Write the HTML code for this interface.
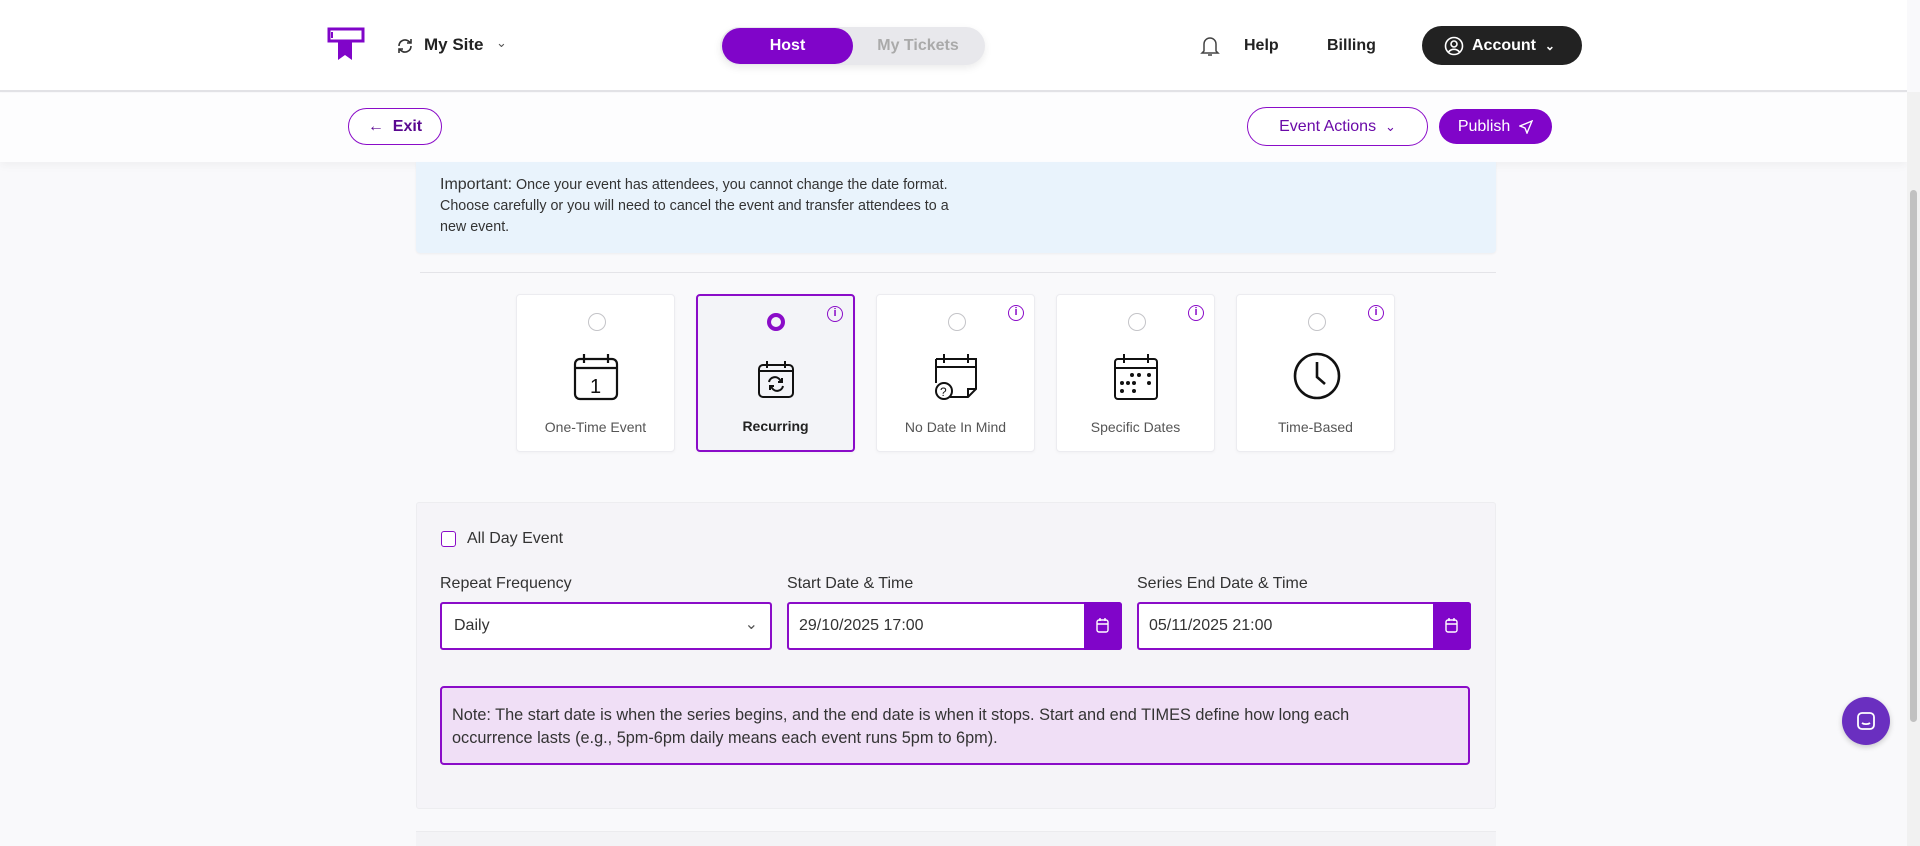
<!DOCTYPE html>
<html><head><meta charset="utf-8"><style>
*{box-sizing:border-box;margin:0;padding:0}
body{width:1920px;height:846px;overflow:hidden;background:#f9f9fb;font-family:"Liberation Sans",sans-serif;color:#222;position:relative}
.abs{position:absolute}
.hdr{left:0;top:0;width:1907px;height:92px;background:#fff;border-bottom:2px solid #e2e2e6}
.bar2{left:0;top:93px;width:1907px;height:69px;background:#fdfdfe;box-shadow:0 4px 8px rgba(0,0,0,.04)}
.btn{position:absolute;border-radius:20px;display:flex;align-items:center;justify-content:center;font-size:16px}
.card{position:absolute;top:294px;width:159px;height:158px;background:#fff;border:1px solid #ececf0;border-radius:4px;box-shadow:0 1px 3px rgba(0,0,0,.04)}
.card.sel{border:2px solid #8a0cc8;background:#f3f4f8}
.radio{position:absolute;left:71px;top:18px;width:18px;height:18px;border:1.5px solid #c4c4c8;border-radius:50%}
.card .lbl{position:absolute;left:0;right:0;top:124px;text-align:center;font-size:14px;color:#555}
.info{position:absolute;right:10px;top:10px;width:16px;height:16px;border:1.5px solid #8a0cc8;border-radius:50%;color:#8a0cc8;font-size:11px;text-align:center;line-height:13px;font-weight:bold}
.ico{position:absolute;left:55px;top:56px}
.lab{position:absolute;top:575px;font-size:16px;color:#333}
.inp{position:absolute;top:602px;height:48px;border:2px solid #8a0cc8;border-radius:3px;background:#fff;font-size:16px;color:#333;padding-left:12px;display:flex;align-items:center}
.cb{position:absolute;right:-2px;top:-2px;width:38px;height:48px;background:#8005c9;border-radius:0 3px 3px 0}
</style></head><body>
<div class="abs hdr"></div>
<svg class="abs" style="left:326px;top:26px" width="40" height="36" viewBox="0 0 40 36"><path d="M3 3h34v12H3z" fill="none" stroke="#8005c9" stroke-width="3"/><path d="M12 15h14v19l-7-5-7 5z" fill="#8005c9"/><path d="M6 6v6" stroke="#8005c9" stroke-width="2"/></svg>
<svg class="abs" style="left:396px;top:37px" width="18" height="18" viewBox="0 0 18 18" fill="none" stroke="#333" stroke-width="1.6"><path d="M3 9a6 6 0 0 1 10-4.5L15 6M15 9a6 6 0 0 1-10 4.5L3 12"/><path d="M15 2v4h-4M3 16v-4h4"/></svg>
<div class="abs" style="left:424px;top:35px;font-size:17px;font-weight:bold">My Site</div>
<div class="abs" style="left:496px;top:35px;font-size:13px;color:#555">&#8964;</div>
<div class="abs" style="left:720px;top:27px;width:265px;height:38px;background:#e8e8ec;border-radius:19px;box-shadow:0 3px 8px rgba(0,0,0,.08)"></div>
<div class="btn" style="left:722px;top:28px;width:131px;height:36px;background:#8005c9;color:#fff;font-weight:bold">Host</div>
<div class="btn" style="left:853px;top:28px;width:130px;height:36px;color:#aaa;font-weight:bold">My Tickets</div>
<svg class="abs" style="left:1200px;top:35px" width="20" height="22" viewBox="0 0 20 22" fill="none" stroke="#444" stroke-width="1.5"><path d="M4 16V9a6 6 0 0 1 12 0v7l2 2H2z"/><path d="M8 20h4"/></svg>
<div class="abs" style="left:1244px;top:37px;font-size:16px;font-weight:bold">Help</div>
<div class="abs" style="left:1327px;top:37px;font-size:16px;font-weight:bold">Billing</div>
<div class="btn" style="left:1422px;top:26px;width:160px;height:39px;background:#222;color:#fff;font-weight:bold;justify-content:flex-start;padding-left:22px">
<svg width="20" height="20" viewBox="0 0 20 20" fill="none" stroke="#fff" stroke-width="1.6" style="margin-right:8px"><circle cx="10" cy="10" r="8.5"/><circle cx="10" cy="8" r="3"/><path d="M4.5 16a7 7 0 0 1 11 0"/></svg>Account&nbsp;&nbsp;<span style="font-size:12px">&#8964;</span></div>
<div class="abs bar2"></div>
<div class="btn" style="left:348px;top:108px;width:94px;height:37px;border:1.5px solid #8a0cc8;color:#5a0890;font-weight:bold;background:#fff">&#8592;&nbsp;&nbsp;Exit</div>
<div class="btn" style="left:1247px;top:107px;width:181px;height:39px;border:1.5px solid #8a0cc8;color:#6a0aa8;background:#fff">Event Actions&nbsp;&nbsp;<span style="font-size:13px">&#8964;</span></div>
<div class="btn" style="left:1439px;top:109px;width:113px;height:35px;background:#8005c9;color:#fff">Publish&nbsp;&nbsp;<svg width="14" height="14" viewBox="0 0 14 14" fill="none" stroke="#fff" stroke-width="1.4"><path d="M13 1L1 6l5 2 2 5z"/></svg></div>
<div class="abs" style="left:1907px;top:92px;width:13px;height:754px;background:#f1f1f1"></div>
<div class="abs" style="left:1910px;top:190px;width:7px;height:532px;background:#c1c1c1;border-radius:4px"></div>
<div class="abs" style="left:416px;top:162px;width:1080px;height:91px;background:#e9f3fc;border-radius:0 0 4px 4px;box-shadow:0 1px 2px rgba(0,0,0,.05)"></div>
<div class="abs" style="left:440px;top:174px;font-size:14.3px;line-height:21px;color:#333"><span style="font-size:16px">Important:</span> Once your event has attendees, you cannot change the date format.<br>Choose carefully or you will need to cancel the event and transfer attendees to a<br>new event.</div>
<div class="abs" style="left:420px;top:272px;width:1076px;height:1px;background:#e4e4e8"></div>
<div class="card" style="left:516px"><div class="radio"></div>
<svg class="ico" width="48" height="50" viewBox="0 0 48 50" fill="none" stroke="#111" stroke-width="2.2"><rect x="3" y="8" width="42" height="40" rx="5"/><path d="M3 17h42M12 3v9M36 3v9"/><text x="18" y="42" font-size="20" fill="#111" stroke="none" font-family="Liberation Sans">1</text></svg>
<div class="lbl">One-Time Event</div></div>
<div class="card sel" style="left:696px;top:294px"><div class="radio" style="border:4px solid #8a0cc8;left:69px;top:17px"></div><div class="info">i</div>
<svg class="ico" style="left:58px;top:62px" width="40" height="42" viewBox="0 0 40 42" fill="none" stroke="#111" stroke-width="2"><rect x="3" y="7" width="34" height="32" rx="4"/><path d="M3 13h34M11 3v7M29 3v7"/><path d="M13 24a6 6 0 0 1 11-2l2 2M27 28a6 6 0 0 1-11 2l-2-2"/><path d="M26 20v4h-4M14 32v-4h4"/></svg>
<div class="lbl" style="font-weight:bold;color:#222;top:122px">Recurring</div></div>
<div class="card" style="left:876px"><div class="radio"></div><div class="info">i</div>
<svg class="ico" width="48" height="50" viewBox="0 0 48 50" fill="none" stroke="#111" stroke-width="2"><path d="M4 8h40v30l-8 8H18"/><path d="M4 8v24M4 16h40M12 3v9M36 3v9"/><path d="M36 46v-8h8"/><circle cx="12" cy="40" r="8"/><text x="8" y="45" font-size="12" fill="#111" stroke="none" font-family="Liberation Sans">?</text></svg>
<div class="lbl">No Date In Mind</div></div>
<div class="card" style="left:1056px"><div class="radio"></div><div class="info">i</div>
<svg class="ico" width="48" height="50" viewBox="0 0 48 50" fill="none" stroke="#111" stroke-width="2"><rect x="3" y="8" width="42" height="40" rx="3"/><path d="M3 17h42M12 3v9M36 3v9"/><g fill="#111" stroke="none"><circle cx="20" cy="24" r="2"/><circle cx="27" cy="24" r="2"/><circle cx="37" cy="24" r="2"/><circle cx="10" cy="32" r="2"/><circle cx="16" cy="32" r="2"/><circle cx="22" cy="32" r="2"/><circle cx="37" cy="32" r="2"/><circle cx="10" cy="40" r="2"/><circle cx="22" cy="40" r="2"/></g></svg>
<div class="lbl">Specific Dates</div></div>
<div class="card" style="left:1236px"><div class="radio"></div><div class="info">i</div>
<svg class="ico" width="50" height="50" viewBox="0 0 50 50" fill="none" stroke="#111" stroke-width="2.6"><circle cx="25" cy="25" r="22"/><path d="M25 11v15l8 7"/></svg>
<div class="lbl">Time-Based</div></div>
<div class="abs" style="left:416px;top:502px;width:1080px;height:307px;background:#f5f4f8;border:1px solid #ededf0;border-radius:3px"></div>
<div class="abs" style="left:441px;top:531px;width:15px;height:16px;border:1.5px solid #8a0cc8;border-radius:3px;background:#fff"></div>
<div class="abs" style="left:467px;top:530px;font-size:16px;color:#333">All Day Event</div>
<div class="lab" style="left:440px">Repeat Frequency</div>
<div class="lab" style="left:787px">Start Date &amp; Time</div>
<div class="lab" style="left:1137px">Series End Date &amp; Time</div>
<div class="inp" style="left:440px;width:332px">Daily<span style="position:absolute;right:12px;top:10px;font-size:16px;color:#555">&#8964;</span></div>
<div class="inp" style="left:787px;width:335px;padding-left:10px">29/10/2025 17:00<div class="cb"><svg style="margin:16px 12px" width="13" height="15" viewBox="0 0 13 15" fill="none" stroke="#fff" stroke-width="1.4"><rect x="1" y="2" width="11" height="12" rx="2"/><path d="M1 6h11M4 0v3M9 0v3"/></svg></div></div>
<div class="inp" style="left:1137px;width:334px;padding-left:10px">05/11/2025 21:00<div class="cb"><svg style="margin:16px 12px" width="13" height="15" viewBox="0 0 13 15" fill="none" stroke="#fff" stroke-width="1.4"><rect x="1" y="2" width="11" height="12" rx="2"/><path d="M1 6h11M4 0v3M9 0v3"/></svg></div></div>
<div class="abs" style="left:440px;top:686px;width:1030px;height:79px;background:#f0dff6;border:2px solid #8a0cc8;border-radius:4px;padding:16px 10px 0 10px;font-size:16.3px;line-height:23px;color:#333">Note: The start date is when the series begins, and the end date is when it stops. Start and end TIMES define how long each<br>occurrence lasts (e.g., 5pm-6pm daily means each event runs 5pm to 6pm).</div>
<div class="abs" style="left:416px;top:831px;width:1080px;height:15px;background:#f3f3f6;border-top:1px solid #ebebee"></div>
<div class="abs" style="left:1842px;top:697px;width:48px;height:48px;border-radius:50%;background:#6a2fc0;box-shadow:0 2px 6px rgba(0,0,0,.2)"></div>
<svg class="abs" style="left:1856px;top:711px" width="20" height="20" viewBox="0 0 20 20" fill="none" stroke="#fff" stroke-width="1.8"><rect x="2" y="2" width="16" height="16" rx="4"/><path d="M6 12c2 1.5 6 1.5 8 0"/></svg>
</body></html>
